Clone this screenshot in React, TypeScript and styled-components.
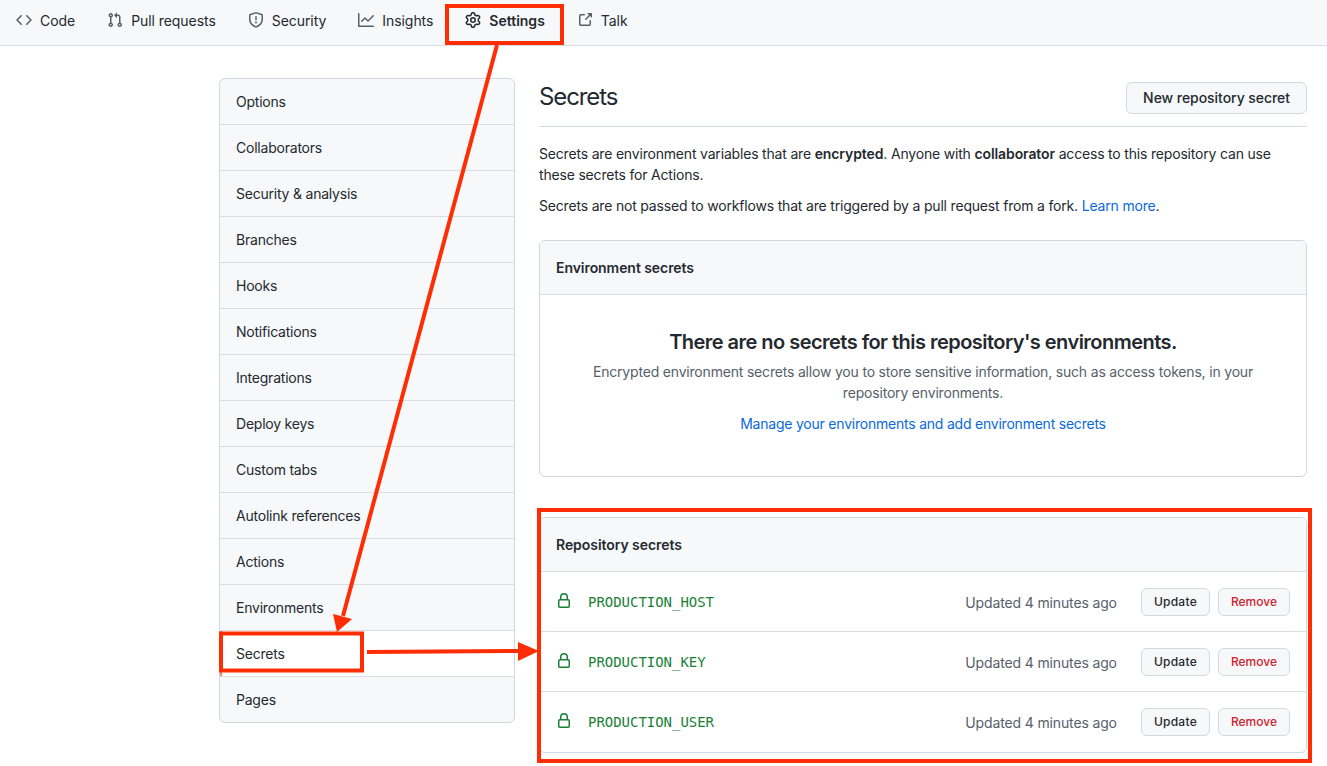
import React from "react";
import styled, { createGlobalStyle } from "styled-components";

const GlobalStyle = createGlobalStyle`
  html, body {
    margin: 0;
    padding: 0;
    background: #ffffff;
  }
  body {
    font-family: Inter, "Liberation Sans", sans-serif;
    font-size: 14px;
    line-height: 21px;
    letter-spacing: -0.22px;
    color: #24292f;
  }
  strong {
    letter-spacing: -0.1px;
    font-weight: 600;
  }
`;

const Page = styled.div`
  position: relative;
  width: 1327px;
  height: 766px;
  overflow: hidden;
  background: #ffffff;
`;

const TabBar = styled.nav`
  height: 46px;
  display: flex;
  align-items: center;
  gap: 32px;
  padding-left: 16px;
  padding-bottom: 5px;
  box-sizing: border-box;
  background: #f6f8fa;
  border-bottom: 1px solid #d8dee4;
  margin-bottom: 33px;
`;

const Tab = styled.a<{ $active?: boolean }>`
  display: flex;
  align-items: center;
  gap: 8px;
  color: #24292f;
  font-weight: ${({ $active }) => ($active ? 600 : 400)};
  letter-spacing: ${({ $active }) => ($active ? "0" : "-0.06px")};
  svg {
    fill: ${({ $active }) => ($active ? "#24292f" : "#57606a")};
  }
`;

const Columns = styled.div`
  display: grid;
  grid-template-columns: 296px 768px;
  gap: 24px;
  margin-left: 219px;
  align-items: start;
`;

const SideMenu = styled.ul`
  margin: 0;
  padding: 0;
  list-style: none;
  background: #f6f8fa;
  border: 1px solid #d0d7de;
  border-radius: 6px;
  overflow: hidden;
  margin-top: -1px;
`;

const SideItem = styled.li<{ $active?: boolean }>`
  height: 46px;
  box-sizing: border-box;
  display: flex;
  align-items: center;
  padding: 0 16px;
  background: ${({ $active }) => ($active ? "#ffffff" : "transparent")};
  border-bottom: 1px solid #d8dee4;
  box-shadow: ${({ $active }) => ($active ? "inset 2px 0 0 #f9826c" : "none")};
  &:last-child {
    border-bottom: 0;
    height: 45px;
  }
`;

const Main = styled.main`
  display: flex;
  flex-direction: column;
`;

const TitleRow = styled.div`
  display: flex;
  align-items: center;
  justify-content: space-between;
  height: 48px;
  padding-bottom: 9px;
  box-sizing: border-box;
  border-bottom: 1px solid #d8dee4;
  margin-bottom: 17px;
`;

const Title = styled.h2`
  margin: 0 0 2px;
  font-size: 24px;
  line-height: 36px;
  font-weight: 400;
  letter-spacing: -1.1px;
`;

const Button = styled.button<{ $small?: boolean; $danger?: boolean }>`
  font-family: inherit;
  font-size: ${({ $small }) => ($small ? "12px" : "14px")};
  font-weight: 500;
  height: ${({ $small }) => ($small ? "28px" : "32px")};
  line-height: 20px;
  padding: 0 ${({ $small }) => ($small ? "12px" : "16px")};
  letter-spacing: ${({ $small, $danger }) => ($danger ? "0" : $small ? "0.25px" : "-0.05px")};
  color: ${({ $danger }) => ($danger ? "#cf222e" : "#24292f")};
  background: #f6f8fa;
  border: 1px solid #d5d9de;
  border-radius: 6px;
`;

const Paragraph = styled.p`
  margin: 0 0 11px;
  line-height: 20.5px;
  letter-spacing: -0.185px;
  max-width: 745px;
`;

const Link = styled.a`
  color: #0969da;
`;

const Card = styled.section`
  border: 1px solid #d0d7de;
  border-radius: 6px;
  overflow: hidden;
`;

const EnvCard = styled(Card)`
  margin-top: 12px;
  margin-bottom: 40px;
  height: 237px;
  box-sizing: border-box;
`;

const CardHeader = styled.header`
  height: 54px;
  box-sizing: border-box;
  display: flex;
  align-items: center;
  padding: 0 16px;
  background: #f6f8fa;
  border-bottom: 1px solid #d8dee4;
  font-weight: 600;
  letter-spacing: -0.06px;
`;

const Blank = styled.div`
  display: flex;
  flex-direction: column;
  align-items: center;
  text-align: center;
  padding: 32px 32px 0;
`;

const BlankTitle = styled.h3`
  margin: 0 0 4px;
  font-size: 20px;
  line-height: 30px;
  font-weight: 600;
  letter-spacing: -0.53px;
`;

const BlankText = styled.p`
  margin: 0 0 10px;
  color: #57606a;
  max-width: 680px;
  letter-spacing: -0.19px;
`;

const SecretRow = styled.div`
  height: 60px;
  box-sizing: border-box;
  display: flex;
  align-items: center;
  padding: 0 16px;
  border-bottom: 1px solid #d8dee4;
  &:last-child {
    border-bottom-color: transparent;
  }
`;

const LockIcon = styled.svg`
  fill: #1a7f37;
  flex: none;
  margin-right: 16px;
`;

const SecretName = styled.code`
  flex: 1;
  font-family: "DejaVu Sans Mono", "Liberation Mono", monospace;
  font-size: 14px;
  letter-spacing: -0.03px;
  color: #1a7f37;
  padding-top: 2px;
`;

const Updated = styled.span`
  color: #57606a;
  margin-right: 24px;
  padding-top: 2px;
  letter-spacing: -0.14px;
`;

const RowActions = styled.div`
  display: flex;
  gap: 8px;
  padding-top: 2px;
`;

const Annotations = styled.svg`
  position: absolute;
  left: 0;
  top: 0;
  pointer-events: none;
`;

const Octicon = ({ d }: { d: string }) => (
  <svg width="16" height="16" viewBox="0 0 16 16" fillRule="evenodd">
    <path d={d} />
  </svg>
);

const tabs = [
  {
    label: "Code",
    d: "M4.72 3.22a.75.75 0 011.06 1.06L2.06 8l3.72 3.72a.75.75 0 11-1.06 1.06L.47 8.53a.75.75 0 010-1.06l4.25-4.25zm6.56 0a.75.75 0 10-1.06 1.06L13.94 8l-3.72 3.72a.75.75 0 101.06 1.06l4.25-4.25a.75.75 0 000-1.06l-4.25-4.25z",
  },
  {
    label: "Pull requests",
    d: "M7.177 3.073L9.573.677A.25.25 0 0110 .854v4.792a.25.25 0 01-.427.177L7.177 3.427a.25.25 0 010-.354zM3.75 2.5a.75.75 0 100 1.5.75.75 0 000-1.5zm-2.25.75a2.25 2.25 0 113 2.122v5.256a2.251 2.251 0 11-1.5 0V5.372A2.25 2.25 0 011.5 3.25zM11 2.5h-1V4h1a1 1 0 011 1v5.628a2.251 2.251 0 101.5 0V5A2.5 2.5 0 0011 2.5zm1 10.25a.75.75 0 111.5 0 .75.75 0 01-1.5 0zM3.75 12a.75.75 0 100 1.5.75.75 0 000-1.5z",
  },
  {
    label: "Security",
    d: "M7.467.133a1.75 1.75 0 011.066 0l5.25 1.68A1.75 1.75 0 0115 3.48V7c0 1.566-.32 3.182-1.303 4.682-.983 1.498-2.585 2.813-5.032 3.855a1.7 1.7 0 01-1.33 0c-2.447-1.042-4.049-2.357-5.032-3.855C1.32 10.182 1 8.566 1 7V3.48a1.75 1.75 0 011.217-1.667l5.25-1.68zm.61 1.429a.25.25 0 00-.153 0l-5.25 1.68a.25.25 0 00-.174.238V7c0 1.358.275 2.666 1.057 3.86.784 1.194 2.121 2.34 4.366 3.297a.2.2 0 00.154 0c2.245-.956 3.582-2.104 4.366-3.298C13.225 9.666 13.5 8.36 13.5 7V3.48a.25.25 0 00-.174-.237l-5.25-1.68zM9 10.5a1 1 0 11-2 0 1 1 0 012 0zm-.25-5.75a.75.75 0 10-1.5 0v3a.75.75 0 001.5 0v-3z",
  },
  {
    label: "Insights",
    d: "M1.5 1.75a.75.75 0 00-1.5 0v12.5c0 .414.336.75.75.75h14.5a.75.75 0 000-1.5H1.5V1.75zm14.28 2.53a.75.75 0 00-1.06-1.06L10 7.94 7.53 5.47a.75.75 0 00-1.06 0L3.22 8.72a.75.75 0 001.06 1.06L7 7.06l2.47 2.47a.75.75 0 001.06 0l5.25-5.25z",
  },
  {
    label: "Settings",
    active: true,
    d: "M7.429 1.525a6.593 6.593 0 011.142 0c.036.003.108.036.137.146l.289 1.105c.147.56.55.967.997 1.189.174.086.341.183.501.29.417.278.97.423 1.53.27l1.102-.303c.11-.03.175.016.195.046.219.31.41.641.573.989.014.031.022.11-.059.19l-.815.806c-.411.406-.562.957-.53 1.456a4.588 4.588 0 010 .582c-.032.499.119 1.05.53 1.456l.815.806c.08.08.073.159.059.19a6.494 6.494 0 01-.573.99c-.02.029-.086.074-.195.045l-1.103-.303c-.559-.153-1.112-.008-1.529.27-.16.107-.327.204-.5.29-.449.222-.851.628-.998 1.189l-.289 1.105c-.029.11-.101.143-.137.146a6.613 6.613 0 01-1.142 0c-.036-.003-.108-.037-.137-.146l-.289-1.105c-.147-.56-.55-.967-.997-1.189a4.502 4.502 0 01-.501-.29c-.417-.278-.97-.423-1.53-.27l-1.102.303c-.11.03-.175-.016-.195-.046a6.492 6.492 0 01-.573-.989c-.014-.031-.022-.11.059-.19l.815-.806c.411-.406.562-.957.53-1.456a4.587 4.587 0 010-.582c.032-.499-.119-1.05-.53-1.456l-.815-.806c-.08-.08-.073-.159-.059-.19a6.44 6.44 0 01.573-.99c.02-.029.086-.075.195-.045l1.103.303c.559.153 1.112.008 1.529-.27.16-.107.327-.204.5-.29.449-.222.851-.628.998-1.189l.289-1.105c.029-.11.101-.143.137-.146zM8 0c-.236 0-.47.01-.701.03-.743.065-1.29.615-1.458 1.261l-.29 1.106c-.017.066-.078.158-.211.224a5.994 5.994 0 00-.668.386c-.123.082-.233.09-.3.071L3.27 2.776c-.644-.177-1.392.02-1.82.63a7.977 7.977 0 00-.704 1.217c-.315.675-.111 1.422.363 1.891l.815.806c.05.048.098.147.088.294a6.084 6.084 0 000 .772c.01.147-.038.246-.088.294l-.815.806c-.474.469-.678 1.216-.363 1.891.2.428.436.835.704 1.218.428.609 1.176.806 1.82.63l1.103-.303c.066-.019.176-.011.299.071.213.143.436.272.668.386.133.066.194.158.212.224l.289 1.106c.169.646.715 1.196 1.458 1.26a8.094 8.094 0 001.402 0c.743-.064 1.29-.614 1.458-1.26l.29-1.106c.017-.066.078-.158.211-.224a5.98 5.98 0 00.668-.386c.123-.082.233-.09.3-.071l1.102.302c.644.177 1.392-.02 1.82-.63.268-.382.505-.789.704-1.217.315-.675.111-1.422-.364-1.891l-.814-.806c-.05-.048-.098-.147-.088-.294a6.1 6.1 0 000-.772c-.01-.147.039-.246.088-.294l.814-.806c.475-.469.679-1.216.364-1.891a7.992 7.992 0 00-.704-1.218c-.428-.609-1.176-.806-1.82-.63l-1.103.303c-.066.019-.176.011-.299-.071a5.991 5.991 0 00-.668-.386c-.133-.066-.194-.158-.212-.224L10.16 1.29C9.99.645 9.444.095 8.701.031A8.094 8.094 0 008 0zm1.5 8a1.5 1.5 0 11-3 0 1.5 1.5 0 013 0zM11 8a3 3 0 11-6 0 3 3 0 016 0z",
  },
  {
    label: "Talk",
    d: "M10.604 1h4.146a.25.25 0 01.25.25v4.146a.25.25 0 01-.427.177L13.03 4.03 9.28 7.78a.751.751 0 01-1.042-.018.751.751 0 01-.018-1.042l3.75-3.75-1.543-1.543A.25.25 0 0110.604 1zM3.75 2A1.75 1.75 0 002 3.75v8.5c0 .966.784 1.75 1.75 1.75h8.5A1.75 1.75 0 0014 12.25v-3.5a.75.75 0 00-1.5 0v3.5a.25.25 0 01-.25.25h-8.5a.25.25 0 01-.25-.25v-8.5a.25.25 0 01.25-.25h3.5a.75.75 0 000-1.5h-3.5z",
  },
];

const menu = [
  "Options",
  "Collaborators",
  "Security & analysis",
  "Branches",
  "Hooks",
  "Notifications",
  "Integrations",
  "Deploy keys",
  "Custom tabs",
  "Autolink references",
  "Actions",
  "Environments",
  "Secrets",
  "Pages",
];

const secrets = ["PRODUCTION_HOST", "PRODUCTION_KEY", "PRODUCTION_USER"];

const LOCK =
  "M4 4v2h-.25A1.75 1.75 0 002 7.75v5.5c0 .966.784 1.75 1.75 1.75h8.5A1.75 1.75 0 0014 13.25v-5.5A1.75 1.75 0 0012.25 6H12V4a4 4 0 10-8 0zm6.5 2V4a2.5 2.5 0 00-5 0v2h5zM12 7.5h.25a.25.25 0 01.25.25v5.5a.25.25 0 01-.25.25h-8.5a.25.25 0 01-.25-.25v-5.5a.25.25 0 01.25-.25H12z";

const RED = "#ff2d04";

const App = () => {
  return (
    <Page>
      <GlobalStyle />
      <TabBar>
        {tabs.map((tab) => (
          <Tab key={tab.label} $active={tab.active}>
            <Octicon d={tab.d} />
            {tab.label}
          </Tab>
        ))}
      </TabBar>
      <Columns>
        <SideMenu>
          {menu.map((item) => (
            <SideItem key={item} $active={item === "Secrets"}>
              {item}
            </SideItem>
          ))}
        </SideMenu>
        <Main>
          <TitleRow>
            <Title>Secrets</Title>
            <Button>New repository secret</Button>
          </TitleRow>
          <Paragraph>
            Secrets are environment variables that are <strong>encrypted</strong>. Anyone with{" "}
            <strong>collaborator</strong> access to this repository can use these secrets for Actions.
          </Paragraph>
          <Paragraph>
            Secrets are not passed to workflows that are triggered by a pull request from a fork.{" "}
            <Link>Learn more</Link>.
          </Paragraph>
          <EnvCard>
            <CardHeader>Environment secrets</CardHeader>
            <Blank>
              <BlankTitle>There are no secrets for this repository's environments.</BlankTitle>
              <BlankText>
                Encrypted environment secrets allow you to store sensitive information, such as access
                tokens, in your repository environments.
              </BlankText>
              <Link>Manage your environments and add environment secrets</Link>
            </Blank>
          </EnvCard>
          <Card>
            <CardHeader>Repository secrets</CardHeader>
            {secrets.map((name) => (
              <SecretRow key={name}>
                <LockIcon width="16" height="16" viewBox="0 0 16 16" fillRule="evenodd">
                  <path d={LOCK} />
                </LockIcon>
                <SecretName>{name}</SecretName>
                <Updated>Updated 4 minutes ago</Updated>
                <RowActions>
                  <Button $small>Update</Button>
                  <Button $small $danger>
                    Remove
                  </Button>
                </RowActions>
              </SecretRow>
            ))}
          </Card>
        </Main>
      </Columns>
      <Annotations width="1327" height="766" viewBox="0 0 1327 766" fill="none" stroke={RED} strokeWidth="4">
        <rect x="447" y="6" width="115" height="37" />
        <rect x="221" y="633.5" width="141" height="37" />
        <rect x="539" y="510" width="771" height="251" />
        <line x1="497" y1="45" x2="343" y2="616" />
        <polygon points="333,614 352,619 337,632" stroke="none" fill={RED} />
        <line x1="367" y1="652" x2="522" y2="651" />
        <polygon points="518,642 518,661 539,651" stroke="none" fill={RED} />
      </Annotations>
    </Page>
  );
};

export default App;
